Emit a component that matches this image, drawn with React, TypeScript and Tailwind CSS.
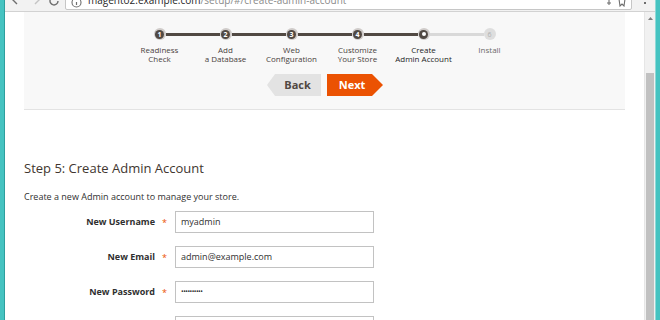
import React from "react";

const steps = [
  { n: "1", l1: "Readiness", l2: "Check" },
  { n: "2", l1: "Add", l2: "a Database" },
  { n: "3", l1: "Web", l2: "Configuration" },
  { n: "4", l1: "Customize", l2: "Your Store" },
  { n: "5", l1: "Create", l2: "Admin Account" },
  { n: "6", l1: "Install", l2: "" },
];

function Circle({ i, n }: { i: number; n: string }) {
  if (i < 4) {
    return (
      <div className="w-[12px] h-[12px] rounded-full bg-[#cfcbc9] flex items-center justify-center shrink-0">
        <div className="w-[9px] h-[9px] rounded-full bg-[#514943] flex items-center justify-center text-white text-[7px] font-bold leading-none">
          {n}
        </div>
      </div>
    );
  }
  if (i === 4) {
    return (
      <div className="w-[12px] h-[12px] rounded-full bg-[#cfcbc9] flex items-center justify-center shrink-0">
        <div className="w-[9px] h-[9px] rounded-full bg-[#514943] flex items-center justify-center">
          <div className="w-[4px] h-[4px] rounded-full bg-white" />
        </div>
      </div>
    );
  }
  return (
    <div className="w-[12px] h-[12px] rounded-full bg-[#dedede] flex items-center justify-center shrink-0 text-[7px] text-[#b0b0b0] leading-none">
      {n}
    </div>
  );
}

function Step({ i, n, l1, l2 }: { i: number; n: string; l1: string; l2: string }) {
  const leftColor = i === 0 ? "bg-transparent" : i <= 4 ? "bg-[#514943]" : "bg-[#d9d9d9]";
  const rightColor = i === 5 ? "bg-transparent" : i < 4 ? "bg-[#514943]" : "bg-[#d9d9d9]";
  const labelColor = i === 4 ? "text-[#262626]" : i === 5 ? "text-[#6b6b6b]" : "text-[#4a423d]";
  return (
    <div className="w-[66px] flex flex-col items-center">
      <div className="w-full flex items-center h-[12px]">
        <div className={`flex-1 h-[3px] ${leftColor}`} />
        <Circle i={i} n={n} />
        <div className={`flex-1 h-[3px] ${rightColor}`} />
      </div>
      <div className={`mt-[5px] text-[8px] leading-[9px] text-center whitespace-nowrap ${labelColor}`}>
        <div>{l1}</div>
        {l2 && <div>{l2}</div>}
      </div>
    </div>
  );
}

function Row({ label, children }: { label: string; children: React.ReactNode }) {
  return (
    <div className="flex items-center">
      <div className="w-[131px] text-right text-[9px] font-bold text-[#303030] whitespace-nowrap">{label}</div>
      <div className="w-[20px] pl-[7px] text-[9px] text-[#eb5202] leading-none">*</div>
      <div className="w-[199px] h-[22px] border border-[#c2c2c2] bg-white flex items-center pl-[5px] text-[9px] text-[#303030]">
        {children}
      </div>
    </div>
  );
}

export default function App() {
  return (
    <div
      className="w-[660px] h-[320px] overflow-hidden flex bg-white"
      style={{ fontFamily: '"Open Sans", "Noto Sans", sans-serif' }}
    >
      <div className="w-[5px] h-full bg-[#45c3c1] border-r border-[#2e9f9e]" />
      <div className="flex-1 flex flex-col min-w-0">
        {/* browser toolbar, mostly scrolled off */}
        <div className="h-[12px] bg-[#f2f2f2] border-b border-[#d2d2d2] overflow-hidden flex items-start shrink-0">
          <div className="w-[60px] flex items-start h-full">
            <svg width="10" height="10" viewBox="0 0 10 10" className="ml-[5px] -mt-[4px]">
              <path d="M7 0 L3 4 L7 8" stroke="#6e6e6e" strokeWidth="1.4" fill="none" />
            </svg>
            <svg width="10" height="10" viewBox="0 0 10 10" className="ml-[12px] -mt-[4px]">
              <path d="M3 0 L7 4 L3 8" stroke="#c4c4c4" strokeWidth="1.4" fill="none" />
            </svg>
            <svg width="12" height="12" viewBox="0 0 12 12" className="ml-[6px] -mt-[5px]">
              <path d="M10 6 A4 4 0 1 1 8 2.5" stroke="#6e6e6e" strokeWidth="1.4" fill="none" />
            </svg>
          </div>
          <div className="w-[567px] h-[30px] -mt-[20px] border border-[#c6c6c6] rounded-[2px] bg-white flex items-end pb-[4px] pl-[5px] shrink-0">
            <svg width="11" height="11" viewBox="0 0 11 11" className="-mb-[3px] shrink-0">
              <circle cx="5.5" cy="5.5" r="4.5" stroke="#6e6e6e" strokeWidth="1.1" fill="none" />
              <path d="M5.5 5 V8" stroke="#6e6e6e" strokeWidth="1.2" />
            </svg>
            <div className="ml-[6px] text-[10px] leading-[10px] whitespace-nowrap">
              <span className="text-[#262626]">magento2.example.com</span>
              <span className="text-[#8a8a8a]">/setup/#/create-admin-account</span>
            </div>
            <div className="flex-1" />
            <svg width="8" height="8" viewBox="0 0 8 8" className="-mb-[2px] mr-[5px]">
              <path d="M4 0 V6 M2 4 H6" stroke="#6e6e6e" strokeWidth="1.1" />
            </svg>
            <svg width="8" height="8" viewBox="0 0 8 8" className="-mb-[2px] mr-[5px]">
              <path d="M1 0 L2 7 L4 5 L6 7 L7 0" stroke="#6e6e6e" strokeWidth="1.1" fill="none" />
            </svg>
          </div>
          <div className="flex-1 flex justify-center">
            <div className="flex flex-col gap-[2px] -mt-[2px] ml-[2px]">
              <div className="w-[2px] h-[2px] bg-[#6e6e6e]" />
              <div className="w-[2px] h-[2px] bg-[#6e6e6e]" />
            </div>
          </div>
        </div>

        <div className="flex-1 flex min-h-0">
          {/* page */}
          <div className="flex-1 px-[19px] overflow-hidden">
            <div className="bg-[#f8f8f8] border-b border-[#e3e3e3] h-[98px] flex flex-col items-center pt-[16px]">
              <div className="flex">
                {steps.map((s, i) => (
                  <Step key={s.n} i={i} n={s.n} l1={s.l1} l2={s.l2} />
                ))}
              </div>
              <div className="flex mt-[11px] gap-[6px]">
                <div className="flex h-[22px]">
                  <svg width="8" height="22" viewBox="0 0 8 22" className="block">
                    <polygon points="8,0 0,11 8,22" fill="#e3e3e3" />
                  </svg>
                  <div className="w-[46px] h-[22px] bg-[#e3e3e3] flex items-center justify-center text-[11px] font-bold text-[#514943]">
                    Back
                  </div>
                </div>
                <div className="flex h-[22px]">
                  <div className="w-[45px] h-[22px] bg-[#eb5202] flex items-center justify-center text-[11px] font-bold text-white pl-[6px]">
                    Next
                  </div>
                  <svg width="11" height="22" viewBox="0 0 11 22" className="block">
                    <polygon points="0,0 11,11 0,22" fill="#eb5202" />
                  </svg>
                </div>
              </div>
            </div>

            <div className="mt-[49px] text-[13px] leading-[18px] text-[#41362f] whitespace-nowrap">
              Step 5: Create Admin Account
            </div>
            <div className="mt-[14px] text-[9px] leading-[12px] text-[#303030] whitespace-nowrap">
              Create a new Admin account to manage your store.
            </div>
            <div className="mt-[8px] flex flex-col gap-[13px]">
              <Row label="New Username">myadmin</Row>
              <Row label="New Email">admin@example.com</Row>
              <Row label="New Password">
                <span className="text-[7px] tracking-[-0.5px] text-[#303030]">••••••••••</span>
              </Row>
              <Row label="Confirm Password">
                <span className="text-[7px] tracking-[-0.5px] text-[#303030]">••••••••••</span>
              </Row>
            </div>
          </div>
          {/* scrollbar */}
          <div className="w-[11px] bg-[#f1f1f1] border-l border-[#e6e6e6] flex flex-col items-center shrink-0">
            <svg width="7" height="5" viewBox="0 0 7 5" className="mt-[4px]">
              <polygon points="3.5,1 6,4 1,4" fill="#7d7d7d" />
            </svg>
            <div className="mt-[52px] w-[8px] flex-1 bg-[#c1c1c1]" />
          </div>
        </div>
      </div>
      <div className="w-[5px] h-full bg-[#45c3c1] border-l border-[#8fd9d7]" />
    </div>
  );
}
